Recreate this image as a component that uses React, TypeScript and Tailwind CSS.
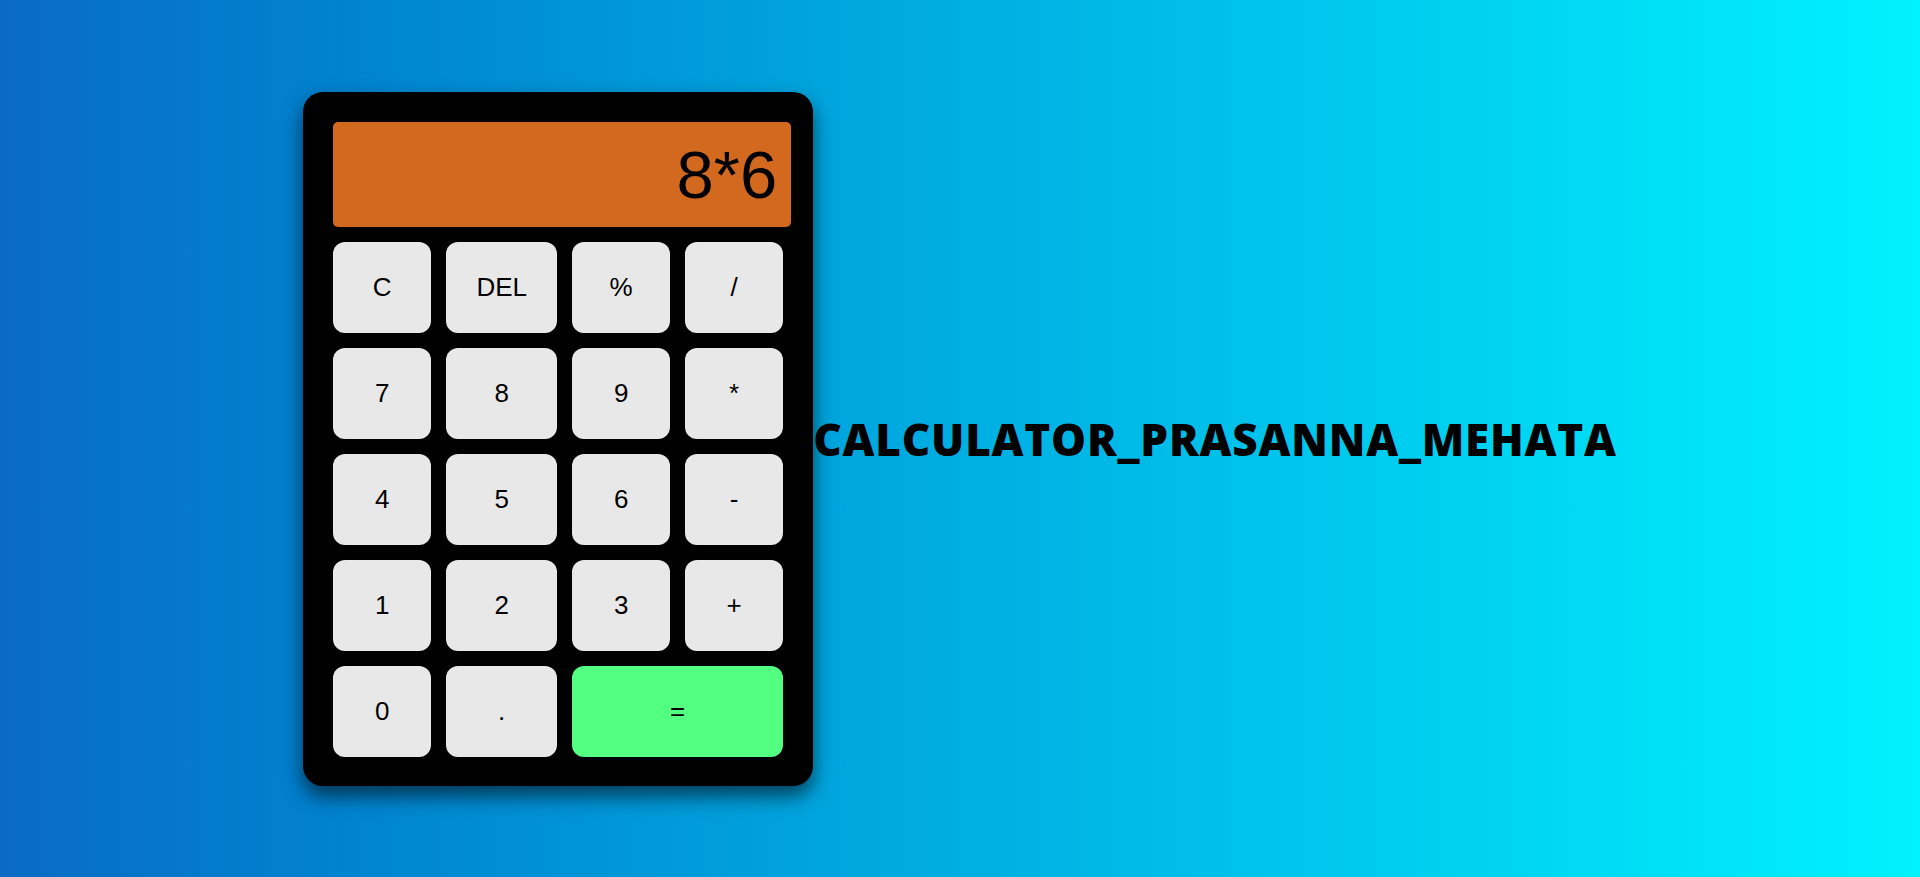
import React from "react";

const keys: { label: string; cls?: string }[] = [
  { label: "C" },
  { label: "DEL" },
  { label: "%" },
  { label: "/" },
  { label: "7" },
  { label: "8" },
  { label: "9" },
  { label: "*" },
  { label: "4" },
  { label: "5" },
  { label: "6" },
  { label: "-" },
  { label: "1" },
  { label: "2" },
  { label: "3" },
  { label: "+" },
  { label: "0" },
  { label: "." },
  { label: "=", cls: "col-span-2 bg-[#52ff80]" },
];

export default function App() {
  return (
    <div className="flex h-[877px] w-full items-center justify-center bg-gradient-to-r from-[#0a6bc4] to-[#00f2fe]">
      <div
        className="flex w-[510px] shrink-0 flex-col gap-[15px] rounded-[20px] bg-black pb-[29px] pl-[30px] pr-[22px] pt-[30px] shadow-[0_10px_20px_rgba(0,0,0,0.6)]"
        style={{ fontFamily: '"Liberation Sans", Arial, sans-serif' }}
      >
        <div className="flex h-[105px] w-[458px] items-center justify-end rounded-[5px] bg-[#d2691e] pr-[14px] text-[67px] leading-none text-black">
          8*6
        </div>
        <div className="grid w-[450px] grid-cols-[98px_111px_98px_98px] gap-x-[15px] gap-y-[15px]">
          {keys.map((k) => (
            <button
              key={k.label}
              className={
                "flex h-[91px] items-center justify-center rounded-xl text-[26px] text-black " +
                (k.cls ? k.cls : "bg-[#e8e8e8]")
              }
            >
              {k.label}
            </button>
          ))}
        </div>
      </div>
      <h1
        className="whitespace-nowrap text-[44px] font-extrabold leading-none tracking-[0.8px] text-black"
        style={{ fontFamily: '"Open Sans", "Noto Sans", sans-serif' }}
      >
        CALCULATOR_PRASANNA_MEHATA
      </h1>
    </div>
  );
}
